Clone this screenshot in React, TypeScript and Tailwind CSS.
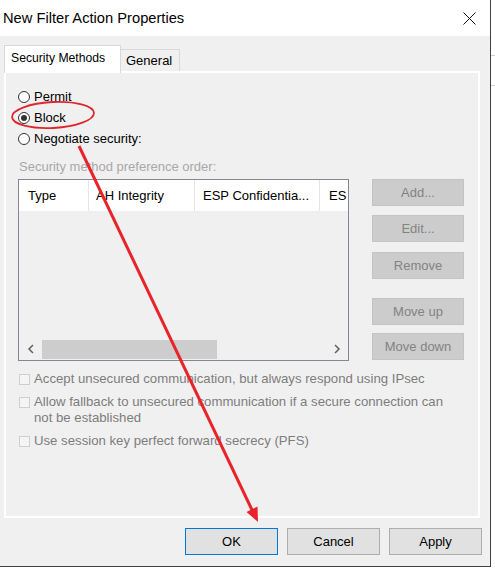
import React from 'react'

const font = { fontFamily: '"Liberation Sans", Arial, sans-serif' }

function Radio({ label, checked }: { label: string; checked?: boolean }) {
  return (
    <div className="flex items-center h-[21px] gap-[4px]">
      <span className="w-[12px] h-[12px] rounded-full border border-[#333] bg-white flex items-center justify-center">
        {checked && <span className="w-[6px] h-[6px] rounded-full bg-[#333]" />}
      </span>
      <span className="text-[13px] text-black">{label}</span>
    </div>
  )
}

function SideButton({ label }: { label: string }) {
  return (
    <div className="w-[92px] h-[27px] bg-[#cccccc] border border-[#c4c4c4] flex items-center justify-center text-[13px] text-[#838383]">
      {label}
    </div>
  )
}

function Check({ children }: { children: React.ReactNode }) {
  return (
    <div className="flex items-start gap-[4px]">
      <span className="mt-[3px] w-[11px] h-[11px] border border-[#cfcfcf] bg-[#f4f4f4] shrink-0" />
      <span className="text-[13.2px] leading-[16px] text-[#7d7d7d]">{children}</span>
    </div>
  )
}

function DialogButton({ label, primary }: { label: string; primary?: boolean }) {
  return (
    <div
      className={
        'w-[93px] h-[27px] bg-[#e1e1e1] flex items-center justify-center text-[13px] text-black border ' +
        (primary ? 'border-[#0078d7]' : 'border-[#adadad]')
      }
    >
      {label}
    </div>
  )
}

export default function App() {
  return (
    <div className="relative w-[495px] h-[568px] bg-white overflow-hidden" style={font}>
      {/* window behind */}
      <div className="absolute right-0 top-[55px] w-[4px] h-px bg-[#cfcfcf]" />
      <div className="absolute right-0 top-[85px] w-[4px] h-px bg-[#cfcfcf]" />

      <div className="w-[491px] h-[567px] flex flex-col bg-[#f0f0f0] border-r border-b border-[#404040]">
        {/* title bar */}
        <div className="h-[36px] bg-white flex items-center justify-between pl-[3px] pr-[14px] shrink-0">
          <span className="text-[14.7px] text-black">New Filter Action Properties</span>
          <svg width="13" height="13" viewBox="0 0 13 13">
            <path d="M0.5 0.5 L12.5 12.5 M12.5 0.5 L0.5 12.5" stroke="#111" strokeWidth="1" />
          </svg>
        </div>

        {/* tabs */}
        <div className="flex items-end h-[35px] pl-[4px] shrink-0">
          <div className="w-[117px] h-[28px] bg-white border-t border-l border-r border-[#d9d9d9] flex items-center pl-[6px] pb-[2px] text-[12.2px] text-black -mb-[2px] relative z-10">
            Security Methods
          </div>
          <div className="w-[59px] h-[22px] bg-[#f0f0f0] border-t border-r border-[#d9d9d9] flex items-center pl-[5px] text-[13px] text-black">
            General
          </div>
        </div>

        {/* panel */}
        <div className="ml-[4px] w-[476px] h-[447px] border-2 border-white bg-[#f0f0f0] flex flex-col pl-[12px] pt-[13px]">
          <Radio label="Permit" />
          <Radio label="Block" checked />
          <Radio label="Negotiate security:" />
          <div className="h-[20px] mt-[8px] flex items-center text-[13px] text-[#a8a8a8] pl-[1px]">
            Security method preference order:
          </div>

          <div className="flex mt-[2px] gap-[23px]">
            {/* list box */}
            <div className="w-[331px] h-[182px] border border-[#828790] bg-[#f0f0f0] flex flex-col">
              <div className="h-[31px] bg-white flex text-[13px] text-black">
                <div className="w-[70px] border-r border-[#e5e5e5] flex items-center pl-[9px]">Type</div>
                <div className="w-[106px] border-r border-[#e5e5e5] flex items-center pl-[7px]">AH Integrity</div>
                <div className="w-[125px] border-r border-[#e5e5e5] flex items-center pl-[8px] whitespace-nowrap overflow-hidden">
                  ESP Confidentia...
                </div>
                <div className="flex-1 flex items-center pl-[9px] overflow-hidden">ES</div>
              </div>
              <div className="flex-1" />
              <div className="h-[22px] flex items-center">
                <div className="w-[23px] flex items-center justify-center">
                  <svg width="8" height="10" viewBox="0 0 8 10">
                    <path d="M6 1 L2 5 L6 9" stroke="#606060" strokeWidth="1.5" fill="none" />
                  </svg>
                </div>
                <div className="w-[175px] h-[19px] bg-[#cdcdcd]" />
                <div className="flex-1" />
                <div className="w-[23px] flex items-center justify-center">
                  <svg width="8" height="10" viewBox="0 0 8 10">
                    <path d="M2 1 L6 5 L2 9" stroke="#606060" strokeWidth="1.5" fill="none" />
                  </svg>
                </div>
              </div>
            </div>

            {/* side buttons */}
            <div className="flex flex-col">
              <SideButton label="Add..." />
              <div className="h-[9px]" />
              <SideButton label="Edit..." />
              <div className="h-[10px]" />
              <SideButton label="Remove" />
              <div className="h-[19px]" />
              <SideButton label="Move up" />
              <div className="h-[8px]" />
              <SideButton label="Move down" />
            </div>
          </div>

          <div className="flex flex-col mt-[10px] gap-[7px] pl-[1px]">
            <Check>Accept unsecured communication, but always respond using IPsec</Check>
            <Check>
              Allow fallback to unsecured communication if a secure connection can
              <br />
              not be established
            </Check>
            <Check>Use session key perfect forward secrecy (PFS)</Check>
          </div>
        </div>

        {/* buttons */}
        <div className="flex justify-end gap-[9px] pr-[8px] mt-[10px]">
          <DialogButton label="OK" primary />
          <DialogButton label="Cancel" />
          <DialogButton label="Apply" />
        </div>
      </div>

      {/* red annotation */}
      <svg className="absolute left-0 top-0 pointer-events-none" width="495" height="568" viewBox="0 0 495 568">
        <ellipse cx="53" cy="115" rx="41" ry="13" fill="none" stroke="#e0262c" strokeWidth="1.8" transform="rotate(-3 53 115)" />
        <line x1="79" y1="146" x2="252" y2="510" stroke="#e8232a" strokeWidth="3" />
        <polygon points="258,522 257.5,506.5 246.5,512" fill="#e8232a" />
      </svg>
    </div>
  )
}
